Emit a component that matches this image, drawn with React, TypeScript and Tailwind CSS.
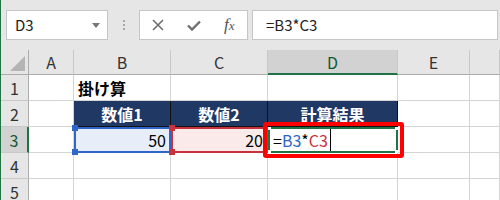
import type { ReactNode } from 'react';

const jp = "font-['Noto_Sans_CJK_JP',sans-serif]";

function Cell({ className = 'border-b border-r border-[#d4d4d4] bg-white', children }: { className?: string; children?: ReactNode }) {
  return <div className={`relative flex items-center ${className}`}>{children}</div>;
}

function ColHead({ label, active }: { label: string; active?: boolean }) {
  return (
    <div
      className={`flex items-center justify-center border-r border-[#c8c8c8] text-[16px] ${
        active ? 'border-b-2 border-b-[#217346] bg-[#d2d2d2] text-[#0f5a36]' : 'border-b border-b-[#ababab] bg-[#e6e6e6] text-[#333]'
      }`}
    >
      {label}
    </div>
  );
}

function RowHead({ label, active }: { label: string; active?: boolean }) {
  return (
    <div
      className={`flex items-center justify-center border-b border-[#c8c8c8] text-[16px] ${
        active ? 'border-r-2 border-r-[#217346] bg-[#d2d2d2] text-[#0f5a36]' : 'border-r border-r-[#ababab] bg-[#e6e6e6] text-[#333]'
      }`}
    >
      {label}
    </div>
  );
}

function Handle({ pos, color }: { pos: string; color: string }) {
  return <span className={`absolute z-10 h-[6px] w-[6px] ${pos} ${color}`} />;
}

function FormulaBar() {
  return (
    <div className="flex h-[50px] items-start bg-[#e6e6e6] pl-[5px] pt-[10px]">
      <div className="relative flex h-[30px] w-[102px] items-center border border-[#c6c6c6] bg-white pl-2 text-[15px] text-[#222]">
        D3
        <span className="absolute right-[7px] top-[12px] h-0 w-0 border-x-[4px] border-t-[5px] border-x-transparent border-t-[#777]" />
      </div>
      <div className="flex h-[30px] w-[31px] flex-col items-center justify-center gap-[2px]">
        <span className="h-[2px] w-[2px] bg-[#a8a8a8]" />
        <span className="h-[2px] w-[2px] bg-[#a8a8a8]" />
        <span className="h-[2px] w-[2px] bg-[#a8a8a8]" />
      </div>
      <div className="flex h-[30px] w-[109px] items-center border border-[#c6c6c6] bg-white">
        <div className="flex w-9 justify-center">
          <svg width="12" height="12" viewBox="0 0 12 12" fill="none" stroke="#6e6e6e" strokeWidth="1.6">
            <path d="M1 1l10 10M11 1L1 11" />
          </svg>
        </div>
        <div className="flex w-9 justify-center">
          <svg width="14" height="11" viewBox="0 0 14 11" fill="none" stroke="#6e6e6e" strokeWidth="2.4">
            <path d="M1 5.5l4 4L13 1.5" />
          </svg>
        </div>
        <div className="flex w-9 justify-center font-['Liberation_Serif',serif] italic text-[#555]">
          <span className="text-[17px]">f</span>
          <span className="mt-[4px] text-[13px]">x</span>
        </div>
      </div>
      <div className="ml-[4px] flex h-[30px] w-[246px] items-center border border-[#c6c6c6] bg-white pl-[13px] text-[15px] text-[#222]">
        =B3*C3
      </div>
    </div>
  );
}

const navy = 'justify-center border-b border-r border-[#111] bg-[#203864] text-[16px] font-bold text-white';

export default function App() {
  return (
    <div className={`relative h-[200px] w-[500px] overflow-hidden border-l border-[#217346] bg-[#e6e6e6] ${jp}`}>
      <FormulaBar />
      <div className="relative grid grid-cols-[28px_45px_97px_97px_130px_72px_1fr] grid-rows-[25px_26px_26px_26px_26px_26px]">
        <div className="relative border-b border-r border-[#ababab] bg-[#e6e6e6]">
          <span className="absolute bottom-[3px] right-[3px] h-0 w-0 border-b-[15px] border-l-[15px] border-b-[#b4b4b4] border-l-transparent" />
        </div>
        <ColHead label="A" />
        <ColHead label="B" />
        <ColHead label="C" />
        <ColHead label="D" active />
        <ColHead label="E" />
        <ColHead label="" />

        <RowHead label="1" />
        <Cell />
        <Cell className="border-b border-r border-[#d4d4d4] bg-white pl-1 text-[16px] font-bold text-black">掛け算</Cell>
        <Cell />
        <Cell />
        <Cell />
        <Cell />

        <RowHead label="2" />
        <Cell />
        <Cell className={navy}>数値1</Cell>
        <Cell className={navy}>数値2</Cell>
        <Cell className={navy}>計算結果</Cell>
        <Cell />
        <Cell />

        <RowHead label="3" active />
        <Cell />
        <Cell className="justify-end border-2 border-[#2e66cc] bg-[#e8eef9] pr-[3px] text-[16px] text-black">
          <Handle pos="-left-[4px] -top-[4px]" color="bg-[#2e66cc]" />
          <Handle pos="-left-[4px] -bottom-[4px]" color="bg-[#2e66cc]" />
          50
        </Cell>
        <Cell className="justify-end border-2 border-[#c8323c] bg-[#fbeaea] pr-[3px] text-[16px] text-black">
          <Handle pos="-left-[4px] -top-[4px]" color="bg-[#c8323c]" />
          <Handle pos="-left-[4px] -bottom-[4px]" color="bg-[#c8323c]" />
          20
        </Cell>
        <Cell className="border-2 border-[#217346] bg-white pl-[3px] text-[16px]">
          <span className="text-black">=</span>
          <span className="text-[#2e66cc]">B3</span>
          <span className="text-black">*</span>
          <span className="text-[#c8323c]">C3</span>
          <span className="ml-[2px] h-[22px] w-px bg-black" />
          <span className="absolute -left-[2px] -top-[2px] h-[3px] w-[3px] bg-white" />
          <span className="absolute -right-[2px] -top-[2px] h-[3px] w-[3px] bg-white" />
          <span className="absolute -bottom-[2px] -left-[2px] h-[3px] w-[3px] bg-white" />
          <span className="absolute -bottom-[2px] -right-[2px] h-[3px] w-[3px] bg-white" />
        </Cell>
        <Cell />
        <Cell />

        <RowHead label="4" />
        <Cell />
        <Cell />
        <Cell />
        <Cell />
        <Cell />
        <Cell />

        <RowHead label="5" />
        <Cell />
        <Cell />
        <Cell />
        <Cell />
        <Cell />
        <Cell />

        <div className="pointer-events-none absolute left-[262px] top-[72px] z-20 h-[36px] w-[141px] rounded-[3px] border-4 border-[#ff0000]" />
      </div>
    </div>
  );
}
